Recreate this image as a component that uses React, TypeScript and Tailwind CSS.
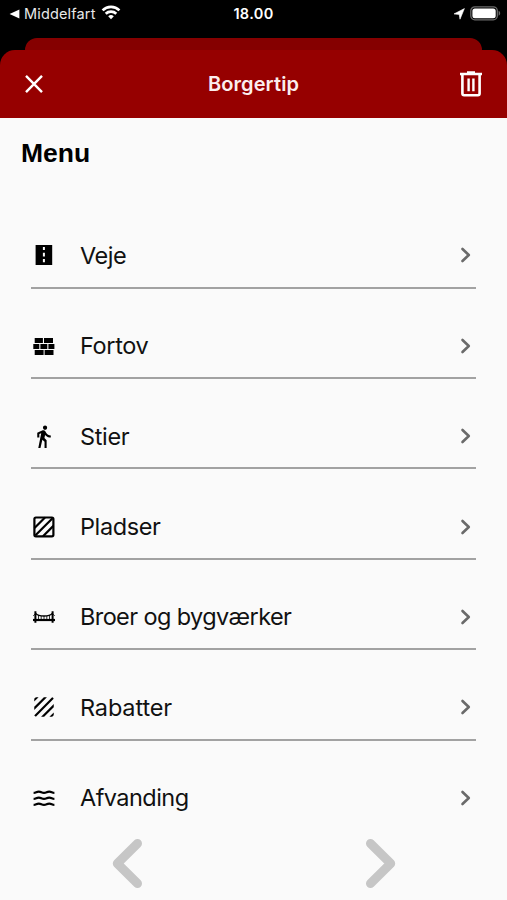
import React from 'react';
import { MdTexture, MdDirectionsWalk } from 'react-icons/md';

const RoadIcon = () => (
  <svg viewBox="0 0 24 24" className="w-6 h-6">
    <path d="M3.6 2h16.6v20H3.6z" fill="#000" />
    <path d="M10.9 4h2v3h-2zM10.9 9.8h2v3.7h-2zM10.9 16h2v3.2h-2z" fill="#fafafa" />
  </svg>
);

const BricksIcon = () => (
  <svg viewBox="0 0 24 24" className="w-6 h-6" fill="#000">
    <path d="M2.7 4h8.2v5H2.7zM12 4h9v5h-9zM1.3 9.9h6v5.2h-6zM8.4 9.9h6.9v5.2H8.4zM16.4 9.9h6v5.2h-6zM2.7 16h8.9v5.1H2.7zM12.6 16h8.9v5.1h-8.9z" />
  </svg>
);

const SquareIcon = () => (
  <svg viewBox="0 0 24 24" className="w-6 h-6" fill="none" stroke="#000" strokeWidth="2.2">
    <rect x="2.4" y="2.5" width="19" height="18.8" rx="1.5" />
    <path d="M2.5 13L13 2.5M3.500 20.300L20.300 3.500M11 21.300L21.400 10.900" />
  </svg>
);

const BridgeIcon = () => (
  <svg viewBox="0 0 24 24" className="w-6 h-6" fill="none" stroke="#000">
    <path d="M3.4 6.2v11.6M20.6 6.2v11.6" strokeWidth="2" />
    <path d="M1 15h22" strokeWidth="2.2" />
    <path d="M3.4 8.2C7 11.9 17 11.9 20.6 8.2" strokeWidth="1.3" />
    <path d="M1.2 10.8l2.2-2M22.8 10.8l-2.2-2" strokeWidth="0.8" />
    <path d="M6.5 10v5M9.2 11v4M12 11v4M14.8 11v4M17.5 10v5" strokeWidth="0.8" />
  </svg>
);

const WavesIcon = () => (
  <svg viewBox="0 0 24 24" className="w-6 h-6" fill="none" stroke="#000" strokeWidth="2.1">
    {[6.9, 12.9, 18.9].map((y) => (
      <path key={y} d={`M1.6 ${y}c2.6 0 2.6-1.3 5.2-1.3s2.6 1.3 5.2 1.3 2.6-1.3 5.2-1.3 2.6 1.3 5.2 1.3`} />
    ))}
  </svg>
);

const items = [
  { label: 'Veje', tracking: 'tracking-[-0.5px]', icon: <RoadIcon /> },
  { label: 'Fortov', tracking: 'tracking-[-0.35px]', icon: <BricksIcon /> },
  { label: 'Stier', tracking: 'tracking-[-0.35px]', icon: <MdDirectionsWalk size={25} className="-ml-[2px]" /> },
  { label: 'Pladser', tracking: 'tracking-[-0.4px]', icon: <SquareIcon /> },
  { label: 'Broer og bygværker', tracking: 'tracking-[-0.6px]', icon: <BridgeIcon /> },
  { label: 'Rabatter', tracking: 'tracking-[-0.15px]', icon: <MdTexture size={26} /> },
  { label: 'Afvanding', tracking: 'tracking-[-0.55px]', icon: <WavesIcon /> },
];

function StatusBar() {
  return (
    <div className="flex h-[38px] items-start justify-between px-[9px] pt-[3px] text-white">
      <div className="flex h-[21px] w-[200px] items-center">
        <svg viewBox="0 0 11 10" className="w-[11px] h-[10px]" fill="#fff">
          <path d="M.6 5L10.4.6v8.8z" />
        </svg>
        <span className="ml-[4px] text-[14.5px] tracking-[0.15px] text-[#e8e8e8]">Middelfart</span>
        <svg viewBox="0 0 20 15" className="ml-[5px] mb-[2px] w-5 h-[15px]" fill="none" stroke="#fff" strokeWidth="2.7">
          <path d="M1.6 5.4a12 12 0 0 1 16.8 0M4.7 8.8a7.7 7.7 0 0 1 10.6 0" />
          <path d="M10 14.2l-2.8-2.9a4 4 0 0 1 5.6 0z" fill="#fff" stroke="none" />
        </svg>
      </div>
      <span className="h-[21px] text-[14.5px] leading-[22px] font-semibold tracking-[0.35px]">18.00</span>
      <div className="flex h-[21px] w-[200px] items-center justify-end">
        <svg viewBox="0 0 12 12" className="w-3 h-3 shrink-0" fill="#fff" stroke="#fff" strokeWidth="0.6">
          <path d="M11.400.6L7 11.200 6.200 6.400 1 5.900z" />
        </svg>
        <svg viewBox="0 0 31 15" className="-mr-[3px] mb-[1px] ml-[5px] w-[31px] h-[15px] shrink-0">
          <rect x=".8" y=".8" width="26.5" height="13" rx="4" fill="none" stroke="#6b6b6b" strokeWidth="1.3" />
          <rect x="2.4" y="2.4" width="23.3" height="9.8" rx="2.5" fill="#fff" />
          <path d="M28.6 4.8c2.1.8 2.1 4.2 0 5z" fill="#6b6b6b" />
        </svg>
      </div>
    </div>
  );
}

export default function App() {
  return (
    <div className="flex h-[900px] w-[507px] flex-col overflow-hidden bg-black font-['Inter',sans-serif] text-black">
      <StatusBar />

      {/* Sheet behind the active one */}
      <div className="mx-[25px] h-[12px] shrink-0 rounded-t-[12px] bg-[#850000]" />

      {/* Header */}
      <header className="flex h-[68px] shrink-0 items-center justify-between rounded-t-[15px] bg-[#960000] px-[24px] text-white">
        <svg viewBox="0 0 20 20" className="w-5 h-5" stroke="#fff" strokeWidth="2.4">
          <path d="M2 1.8l16 16.4M18 1.8L2 18.2" />
        </svg>
        <h1 className="ml-[4px] text-[20px] font-semibold tracking-[0.1px] text-[#fbeeee]">Borgertip</h1>
        <svg viewBox="0 0 24 26" className="w-6 h-[26px]" fill="none" stroke="#fff">
          <path d="M1 2.9h22M8 1.5h8" strokeWidth="2.5" />
          <path d="M3.4 3.5v19a1.7 1.7 0 0 0 1.7 1.7h13.8a1.7 1.7 0 0 0 1.7-1.7v-19" strokeWidth="2.6" />
          <path d="M9.6 7.5v12.8M14.4 7.5v12.8" strokeWidth="2.4" />
        </svg>
      </header>

      <main className="flex flex-1 flex-col bg-[#fafafa]">
        <h2 className="h-[80.3px] pl-[21px] pt-[19px] font-['Liberation_Sans',sans-serif] text-[26.5px] leading-[32px] font-bold">Menu</h2>

        <ul className="ml-[31px] w-[445px]">
          {items.map((item) => (
            <li
              key={item.label}
              className="flex h-[90.4px] items-center border-b-2 border-[#a2a2a2] pt-[26px] last:border-b-transparent"
            >
              <span className="flex w-[26px] shrink-0 items-center justify-center">{item.icon}</span>
              <span className={`ml-[23px] flex-1 text-[23.5px] whitespace-nowrap text-[#111] ${item.tracking}`}>
                {item.label}
              </span>
              <svg viewBox="0 0 12 16" className="mr-[4px] w-3 h-4" fill="none" stroke="#6a6a6a" strokeWidth="2.6" strokeLinecap="round" strokeLinejoin="round">
                <path d="M2.5 2l6.3 6-6.3 6" />
              </svg>
            </li>
          ))}
        </ul>

        {/* Pager arrows */}
        <div className="mt-[6px] flex justify-between pl-[110px] pr-[111px]">
          <svg viewBox="0 0 34 52" className="w-[34px] h-[52px]" fill="none" stroke="#c6c6c6" strokeWidth="9" strokeLinecap="round" strokeLinejoin="round">
            <path d="M27.5 6.5L7.3 26.5l20.2 20" />
          </svg>
          <svg viewBox="0 0 34 52" className="w-[34px] h-[52px]" fill="none" stroke="#c6c6c6" strokeWidth="9" strokeLinecap="round" strokeLinejoin="round">
            <path d="M8.5 6.5l20.2 20-20.2 20" />
          </svg>
        </div>
      </main>
    </div>
  );
}
